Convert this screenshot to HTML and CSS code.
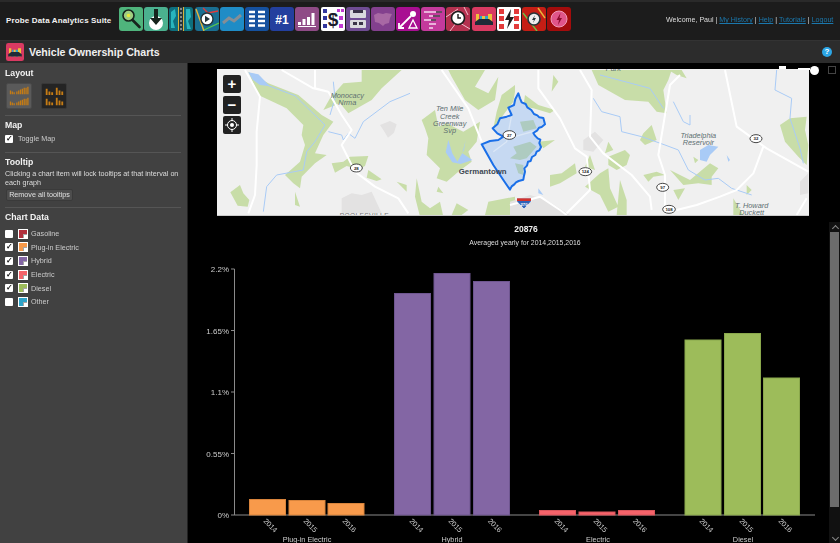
FILE: index.html
```html
<!DOCTYPE html>
<html lang="en">
<head>
  <meta charset="UTF-8">
  <meta name="viewport" content="width=device-width, initial-scale=1.0">
  <title>Vehicle Ownership Charts</title>
  <link rel="stylesheet" href="styles.css">
</head>
<body>
  <header class="top-bar">
    <div class="suite-name">Probe Data Analytics Suite</div>
    <nav class="suite-icons">
      <svg class="suite-icon" viewBox="0 0 24 24"><rect width="24" height="24" rx="3" fill="#4fb47c"/><circle cx="9.5" cy="8.5" r="5.5" fill="#9fce82" stroke="#17231c" stroke-width="1.6"/><circle cx="9.5" cy="8.5" r="1.8" fill="#e6e83a"/><path d="M13.5 13l7 7" stroke="#17231c" stroke-width="2.6" stroke-linecap="round"/></svg>
      <svg class="suite-icon" viewBox="0 0 24 24"><rect width="24" height="24" rx="3" fill="#4bb18f"/><circle cx="12" cy="16" r="7" fill="#fff"/><path d="M10 2h4v9h4l-6 7-6-7h4z" fill="#17231c"/></svg>
      <svg class="suite-icon" viewBox="0 0 24 24"><rect width="24" height="24" rx="3" fill="#0d6f7e"/><path d="M2 5l4-3 1 7-3 5 2 7H2zM17 2h4l1 8-3 4 3 8h-4l-1-9z" fill="#27b5bd"/><rect x="9" width="6" height="24" fill="#26343a"/><path d="M9.5 0v24" stroke="#d9b23a"/><path d="M14.5 0v24" stroke="#d9b23a"/><path d="M12 1v22" stroke="#ddd" stroke-dasharray="2 2"/></svg>
      <svg class="suite-icon" viewBox="0 0 24 24"><rect width="24" height="24" rx="3" fill="#1a6f92"/><path d="M1 2l8 22" stroke="#e8b53a" stroke-width="1.4"/><path d="M8 1l5 5 10-2" stroke="#e23b3b" stroke-width="1.4" fill="none"/><path d="M9 23l15-7" stroke="#58c84e" stroke-width="1.2"/><circle cx="12" cy="12" r="6" fill="#fff" stroke="#26343a" stroke-width="1.4"/><path d="M10 8.8l5 3.2-5 3.2z" fill="#26343a"/></svg>
      <svg class="suite-icon" viewBox="0 0 24 24"><rect width="24" height="24" rx="3" fill="#1f8cc6"/><path d="M3 16l6-5 5 3 7-6" stroke="#858e96" stroke-width="3" fill="none"/></svg>
      <svg class="suite-icon" viewBox="0 0 24 24"><rect width="24" height="24" rx="3" fill="#15519f"/><path d="M4 5h6M13 5h7M4 9.500h6M13 9.500h7M4 14h6M13 14h7M4 18.500h6M13 18.500h7" stroke="#fff" stroke-width="2.400"/></svg>
      <svg class="suite-icon" viewBox="0 0 24 24"><rect width="24" height="24" rx="3" fill="#233f9e"/><text x="12" y="17" class="icon-text">#1</text></svg>
      <svg class="suite-icon" viewBox="0 0 24 24"><rect width="24" height="24" rx="3" fill="#8f4b86"/><path d="M3 18v-3h3v3zM7.500 18v-6h3v6zM12 18v-8h3v8zM16.500 18V6h3v12z" fill="#fff"/><path d="M3 19.500h18" stroke="#fff"/></svg>
      <svg class="suite-icon" viewBox="0 0 24 24"><rect width="24" height="24" rx="2" fill="#fff"/><path d="M16 2h3v3h-3zM20 2h3v3h-3zM18 9h4v4h-4zM18 17h4v4h-4z" fill="#c23ad2"/><path d="M2 2h4v4H2zM2 9h4v4H2zM2 17h4v4H2z" fill="#34379c"/><text x="12" y="19" class="icon-dollar">$</text></svg>
      <svg class="suite-icon" viewBox="0 0 24 24"><rect width="24" height="24" rx="3" fill="#6f4c93"/><rect x="4" y="3" width="16" height="8" rx="1" fill="#d9d9de"/><rect x="7" y="3" width="10" height="3" fill="#3a3448"/><rect x="4" y="13" width="16" height="8" rx="1" fill="#d9d9de"/><rect x="7" y="15" width="4" height="3" fill="#3a3448"/><rect x="13" y="15" width="4" height="3" fill="#3a3448"/></svg>
      <svg class="suite-icon" viewBox="0 0 24 24"><rect width="24" height="24" rx="3" fill="#83408e"/><path d="M3 8l4-2 5 1 3-1 6 1-2 4-1 5-4 1-2 2-4-3-4-1z" fill="#a868a4"/></svg>
      <svg class="suite-icon" viewBox="0 0 24 24"><rect width="24" height="24" rx="3" fill="#a90e92"/><circle cx="17" cy="7" r="3" fill="#fff"/><path d="M15 9L4 20" stroke="#fff" stroke-width="1.800"/><path d="M3 16v5h5" stroke="#fff" stroke-width="1.800" fill="none"/><path d="M17 13l4 8h-8z" fill="none" stroke="#fff" stroke-width="1.300"/></svg>
      <svg class="suite-icon" viewBox="0 0 24 24"><rect width="24" height="24" rx="3" fill="#c43a9c"/><path d="M3 5h18M8 9h11M3 13h12M8 17h7M8 21h4" stroke="#f5d8ee" stroke-width="1.600"/><path d="M15 5h6M12 9h7M10 13h5" stroke="#3a2a3a" stroke-width="1.600"/></svg>
      <svg class="suite-icon" viewBox="0 0 24 24"><rect width="24" height="24" rx="3" fill="#b4314f"/><path d="M0 10L12 2M14 16l10 6M4 24l6-8M18 0l4 8" stroke="#f0c0cc"/><circle cx="12" cy="11" r="6.500" fill="#fff" stroke="#1c1c1c" stroke-width="1.600"/><path d="M12 7v4h3" stroke="#1c1c1c" stroke-width="1.400" fill="none"/></svg>
      <svg class="suite-icon" viewBox="0 0 24 24"><rect width="24" height="24" rx="3" fill="#d93a62"/><path d="M4 18V7h3v11zM10 18V9h3v9zM16 18V7h4v11z" fill="#efc23a"/><path d="M8 9h2v9H8zM13 9h3v9h-3z" fill="#2aa6cf"/><path d="M3 15l4-3h10l4 3v3H3z" fill="#1f2b38"/></svg>
      <svg class="suite-icon" viewBox="0 0 24 24"><rect width="24" height="24" rx="2" fill="#fff"/><path d="M2 2h5v5H2zM17 2h5v5h-5zM2 9h5v5H2zM17 9h5v5h-5zM2 17h5v5H2zM17 17h5v5h-5z" fill="#e23a3a"/><path d="M14 2l-6 11h4l-2 9 7-12h-4z" fill="#1c1c1c"/></svg>
      <svg class="suite-icon" viewBox="0 0 24 24"><rect width="24" height="24" rx="3" fill="#c51e15"/><path d="M1 6l14 18" stroke="#6cc04a" stroke-width="1.400"/><path d="M16 1l7 10" stroke="#e8b53a" stroke-width="1.400"/><circle cx="12" cy="12" r="6" fill="#eee" stroke="#26343a" stroke-width="1.600"/><path d="M13 8l-3 5h2l-1 3 3-5h-2z" fill="#26343a"/></svg>
      <svg class="suite-icon" viewBox="0 0 24 24"><rect width="24" height="24" rx="3" fill="#a30c0c"/><circle cx="12" cy="12" r="8" fill="#e0558a" stroke="#f09ab8"/><path d="M13.500 6l-4 7h2.500l-1 5 4-7h-2.500z" fill="#8c0b2e"/></svg>
    </nav>
    <div class="user-links">Welcome, Paul | <a href="#">My History</a> | <a href="#">Help</a> | <a href="#">Tutorials</a> | <a href="#">Logout</a></div>
  </header>

  <div class="title-bar">
    <svg class="title-icon" viewBox="0 0 24 24"><rect width="24" height="24" rx="3" fill="#d93a62"/><path d="M4 18V7h3v11zM10 18V9h3v9zM16 18V7h4v11z" fill="#efc23a"/><path d="M8 9h2v9H8zM13 9h3v9h-3z" fill="#2aa6cf"/><path d="M3 15l4-3h10l4 3v3H3z" fill="#1f2b38"/></svg>
    <h1>Vehicle Ownership Charts</h1>
    <span class="help-badge">?</span>
  </div>

  <div class="content">
    <aside class="sidebar">
      <section class="panel">
        <h2>Layout</h2>
        <div class="layout-options">
          <button class="layout-btn active">
            <svg viewBox="0 0 24 24"><path d="M2 10V6h1.400v4zM4 10V7h1.400v3zM6 10V8h1.400v2zM9 10V7h1.400v3zM11 10V6h1.400v4zM13 10V5h1.400v5zM15 10V4h1.400v6zM17 10V3h1.400v7zM19 10V3h1.400v7zM21 10V2h1.400v8zM2 22v-4h1.400v4zM4 22v-3h1.400v3zM6 22v-2h1.400v2zM9 22v-3h1.400v3zM11 22v-4h1.400v4zM13 22v-5h1.400v5zM15 22v-6h1.400v6zM17 22v-7h1.400v7zM19 22v-7h1.400v7zM21 22v-8h1.400v8z" fill="#c67c14"/></svg>
          </button>
          <button class="layout-btn">
            <svg viewBox="0 0 24 24"><path d="M3 11V4h2v7zM6 11V7h2v4zM9 11V8h2v3zM14 11V3h2v8zM17 11V6h2v5zM20 11V7h2v4zM3 22v-7h2v7zM6 22v-4h2v4zM9 22v-3h2v3zM14 22v-8h2v8zM17 22v-5h2v5zM20 22v-4h2v4z" fill="#c67c14"/></svg>
          </button>
        </div>
      </section>
      <section class="panel">
        <h2>Map</h2>
        <label class="check-row"><input type="checkbox" checked> Toggle Map</label>
      </section>
      <section class="panel">
        <h2>Tooltip</h2>
        <p>Clicking a chart item will lock tooltips at that interval on each graph</p>
        <button class="plain-btn">Remove all tooltips</button>
      </section>
      <section class="panel last">
        <h2>Chart Data</h2>
        <label class="check-row series"><input type="checkbox"><span class="swatch gasoline"></span>Gasoline</label>
        <label class="check-row series"><input type="checkbox" checked><span class="swatch plugin"></span>Plug-in Electric</label>
        <label class="check-row series"><input type="checkbox" checked><span class="swatch hybrid"></span>Hybrid</label>
        <label class="check-row series"><input type="checkbox" checked><span class="swatch electric"></span>Electric</label>
        <label class="check-row series"><input type="checkbox" checked><span class="swatch diesel"></span>Diesel</label>
        <label class="check-row series"><input type="checkbox"><span class="swatch other"></span>Other</label>
      </section>
    </aside>

    <main class="main">
      <div class="map">
        <svg class="map-art" viewBox="217 69 592 146">
          <rect x="217" y="69" width="592" height="146" fill="#f0f0f0"/>

          <g transform="translate(215 65) scale(.33333)">
            <path class="gray" d="M495 180l30-12 20 10-8 25-18 15-12-20zM380 400l30-15 30 5 30-10 30 65H380z"/>
            <path class="green" d="M100 20l60 35 90 35 70 60 35 20-30 40-25 55 35 5-35 25-40 40-5 35-20-15-25-25 45-40 15-50-10-30 5-30-50-50-85-40zM440 15h120l-60 55-30 35-70 40-25-30-50 20 20-35 40-45 55-5zM700 15h110l-30 50 40 20 30-50-10 70-50 30-40-30-40-70zM620 165l40-30 10 50 25-10 50 25 50-30-10 60-25 30 10 30-40 30-35 30-30-10 10-30-40-40 5-50-10-30zM350 295l35-5 20-15 55-2-10 30-20 10-35-10-35 20zM460 315l40 28-15 5-30-10zM75 360l10 25 18 20-5 20-30-3-22-40zM545 350l30 10 0 20zM605 340l15 70 25 20 30-20 10 45h-70l-15-60zM670 365l15 20-20-5zM725 415l35 20-20 15h-30zM820 410l80-15v55h-90zM835 190l60-80 5-30v-20l-40 30-15 50zM240 380l15 45-15-5z"/>
            <path class="water" d="M100 22l30 6 35 36-30-4-22-16zM700 225l12 40 15 25 20-35 5-30-10 40 30 20-35 12-25-5-20-30z"/>
            <path class="river" d="M160 62l80 30 90 88-30 50-25 30-10 55-80 15-30 35-10 75M340 200l40 10 5 15 15-20 20 15 25-50 80-60 60-25M345 150l15-50-5-50"/>
            <path class="road" d="M90 15l45 80-10 105 0 100-5 90-20 55M200 15l95 55 45 10 40 70 30 45-30 45 40 80 60 45 70 35 30 45M300 15v55M680 15l80 115 40 100M300 70l40 10"/>
            <text class="place" x="397" y="98">Monocacy</text>
            <text class="place" x="397" y="120">Nrma</text>
            <text class="place" x="704" y="139">Ten Mile</text>
            <text class="place" x="704" y="161">Creek</text>
            <text class="place" x="704" y="183">Greenway</text>
            <text class="place" x="704" y="204">Svp</text>
            <text class="ghost" x="448" y="458">POOLESVILLE</text>
            <ellipse class="shield" cx="424" cy="309" rx="18" ry="12"/>
            <text class="shield-no" x="424" y="314">28</text>
          </g>

          <g transform="translate(510 65) scale(.33333)">
            <path class="gray" d="M220 225l35-25 25 25-30 35-30-5zM0 410l60-20 50 15 70 45H0zM870 350l25-25v60l-25 5z"/>
            <path class="green" d="M245 15h240l-10 30-15 30 10 70-30-5-25-30-70-5-80-45zM475 15h40l15 25-30-10zM400 205l25-25 15 45-35 15-15-15zM295 275l50-20 15 15-10 30-30 15-25-15zM295 230l15 25-25 10zM240 270l15 45-30-10zM225 365l45-40 25-15 5 60 25 55-30 15-25-50zM330 345l20 60 0 45h-30zM120 330l35-5 40-30 5 30-50 30-30 10zM400 330l40-10 25 10-35 5-15 15zM490 375l35-5-20 35zM480 315l60 30 60-50 25 15-20 25 0 25-40-5-45 5zM710 360l15 15-15 15zM670 400l30 50h-30zM810 180l30-20 50-5-5 40 10 45-5 60-25-25-40-45zM45 90l40 30 50 15-15 10-50-15-30-5zM85 230l50-5-35 25zM130 30l15 20-20 30zM195 25l15 30zM550 275l15 10-10 10z"/>
            <path class="water" d="M570 255l25-15 30 5-25 25-10 20-20-5zM650 270l10 15-5 5zM85 370l15 20-15-5z"/>
            <path class="river" d="M250 100l25 40 55 15 5 45 60 15 70 25 40 15 30 60 50 30 40-5 40 30 60 20M490 110l30 60 20 10 0-30M800 15l-5 60 50 25-5 60 30 90 10 45M270 30l150 40 40 60"/>
            <path class="road" d="M85 15v55l65 90 45 90 35 25 10 100-70 70M210 15l35 60-5 140 40 50 85 65 55 65 5 40M510 30l-30 30-15 90-20 120 20 60 0 100M645 15l35 170 90 65 125 70M760 245l-30 80-50 50-50 20-70 25-60 15M890 400l-30 50M0 420l90-25 60 40 20 15"/>
            <text class="place" x="565" y="218">Triadelphia</text>
            <text class="place" x="565" y="240">Reservoir</text>
            <text class="place" x="725" y="428">T. Howard</text>
            <text class="place" x="725" y="450">Duckett</text>
            <text class="place" x="310" y="18">Park</text>
            <ellipse class="shield" cx="738" cy="221" rx="18" ry="12"/>
            <text class="shield-no" x="738" y="226">32</text>
            <ellipse class="shield" cx="226" cy="320" rx="19" ry="12"/>
            <text class="shield-no" x="226" y="325">124</text>
            <ellipse class="shield" cx="458" cy="367" rx="18" ry="12"/>
            <text class="shield-no" x="458" y="372">97</text>
            <ellipse class="shield" cx="477" cy="433" rx="19" ry="12"/>
            <text class="shield-no" x="477" y="438">108</text>
          </g>

          <g transform="translate(440 85) scale(.33333)">
            <path class="zone-fill" d="M235 25L240 40 245 52 257 57 262 67 274 75 282 87 292 91 298 97 310 99 315 118 305 126 297 128 292 136 280 144 285 152 293 160 301 164 298 174 303 186 298 196 290 200 286 210 276 216 272 228 264 230 261 242 253 250 255 260 252 272 250 284 236 288 228 292 223 298 215 304 210 314 190 285 160 240 125 178 150 168 175 165 190 155 172 145 158 130 172 118 180 100 200 95 215 90 205 68 222 60 226 42z"/>
            <path class="zone-green" d="M240 110l40-5 10 25-40 10zM220 185l50-15 20 15-30 35-20 5-30-5 20-15zM225 235l25 5 0 30-15-5z"/>
            <path class="zone-road" d="M215 90l-15 80-40 30M205 160l90-25"/>
            <path class="zone-line" d="M235 25L240 40 245 52 257 57 262 67 274 75 282 87 292 91 298 97 310 99 315 118 305 126 297 128 292 136 280 144 285 152 293 160 301 164 298 174 303 186 298 196 290 200 286 210 276 216 272 228 264 230 261 242 253 250 255 260 252 272 250 284 236 288 228 292 223 298 215 304 210 314 190 285 160 240 125 178 150 168 175 165 190 155 172 145 158 130 172 118 180 100 200 95 215 90 205 68 222 60 226 42z"/>
            <ellipse class="shield" cx="208" cy="150" rx="19" ry="13"/>
            <text class="shield-no" x="208" y="155">27</text>
            <path d="M231 340h42v10l-21 22-21-22z" fill="#2e62b8" stroke="#fff" stroke-width="2"/>
            <path d="M231 340h42v8h-42z" fill="#d2322c"/>
            <text class="interstate" x="252" y="362">270</text>
            <text class="town" x="128" y="268">Germantown</text>
          </g>
        </svg>
        <div class="map-controls">
          <button class="map-btn">+</button>
          <button class="map-btn">&minus;</button>
          <button class="map-btn">
            <svg viewBox="0 0 16 16"><circle cx="8" cy="8" r="4.500" fill="none" stroke="#fff"/><circle cx="8" cy="8" r="2" fill="#fff"/><path d="M8 1v3M8 12v3M1 8h3M12 8h3" stroke="#fff"/></svg>
          </button>
        </div>
      </div>
      <div class="map-slider">
        <span class="slider-stop"></span>
        <span class="slider-fill"></span>
        <span class="slider-knob"></span>
        <span class="slider-box"></span>
      </div>

      <div class="chart-row">
        <svg class="chart" viewBox="188 222 641 321">
          <text class="chart-title" x="526" y="232">20876</text>
          <text class="chart-sub" x="525" y="245">Averaged yearly for 2014,2015,2016</text>

          <path class="axis" d="M231 269h3.500v246M231 330.500h3.500M231 392h3.500M231 453.500h3.500M231 515h584"/>
          <text class="tick" x="229" y="272">2.2%</text>
          <text class="tick" x="229" y="334">1.65%</text>
          <text class="tick" x="229" y="395">1.1%</text>
          <text class="tick" x="229" y="457">0.55%</text>
          <text class="tick" x="229" y="518">0%</text>

          <g class="bars plugin">
            <rect x="249.500" y="499.500" width="36" height="15.500"/>
            <rect x="289" y="500.500" width="36" height="14.500"/>
            <rect x="328" y="503.500" width="36" height="11.500"/>
          </g>
          <g class="bars hybrid">
            <rect x="394.500" y="293.500" width="36" height="221.500"/>
            <rect x="434" y="273.500" width="36" height="241.500"/>
            <rect x="473.500" y="281.500" width="36" height="233.500"/>
          </g>
          <g class="bars electric">
            <rect x="539.500" y="510.500" width="36" height="4.500"/>
            <rect x="579" y="512" width="36" height="3"/>
            <rect x="618.500" y="510.500" width="36" height="4.500"/>
          </g>
          <g class="bars diesel">
            <rect x="685" y="340" width="36" height="175"/>
            <rect x="724.500" y="333.500" width="36" height="181.500"/>
            <rect x="763.500" y="378" width="36" height="137"/>
          </g>

          <g class="years">
            <text transform="translate(263 521.500) rotate(45)">2014</text>
            <text transform="translate(303 521.500) rotate(45)">2015</text>
            <text transform="translate(342 521.500) rotate(45)">2016</text>
            <text transform="translate(409 521.500) rotate(45)">2014</text>
            <text transform="translate(448 521.500) rotate(45)">2015</text>
            <text transform="translate(487.500 521.500) rotate(45)">2016</text>
            <text transform="translate(554 521.500) rotate(45)">2014</text>
            <text transform="translate(593 521.500) rotate(45)">2015</text>
            <text transform="translate(632.500 521.500) rotate(45)">2016</text>
            <text transform="translate(699 521.500) rotate(45)">2014</text>
            <text transform="translate(739 521.500) rotate(45)">2015</text>
            <text transform="translate(778 521.500) rotate(45)">2016</text>
          </g>
          <text class="group" x="307" y="542">Plug-in Electric</text>
          <text class="group" x="452" y="542">Hybrid</text>
          <text class="group" x="598" y="542">Electric</text>
          <text class="group" x="743" y="542">Diesel</text>
        </svg>
        <div class="scrollbar">
          <span class="scroll-arrow up"></span>
          <span class="scroll-thumb"></span>
          <span class="scroll-arrow down"></span>
        </div>
      </div>
    </main>
  </div>
</body>
</html>
```

FILE: styles.css
```css
* {
  box-sizing: border-box;
}

html, body {
  height: 100%;
}

body {
  margin: 0;
  display: flex;
  flex-direction: column;
  overflow: hidden;
  background: #000;
  color: #e0e0e0;
  font-family: "Liberation Sans", Arial, sans-serif;
  font-size: 7.200px;
}

/* top bar */
.top-bar {
  height: 41px;
  flex: none;
  display: flex;
  align-items: center;
  padding: 0 7px 4px 6px;
  background: #1c1c1c;
  border-top: 2px solid #2a2a2a;
  border-bottom: 1px solid #333;
}

.suite-name {
  width: 113px;
  flex: none;
  padding-top: 2px;
  font-size: 8px;
  font-weight: bold;
  letter-spacing: 0.15px;
  color: #f2f2f2;
  white-space: nowrap;
}

.suite-icons {
  display: flex;
  gap: 1.2px;
}

.suite-icon {
  width: 24px;
  height: 24px;
  flex: none;
}

.icon-text {
  font-size: 12px;
  font-weight: bold;
  fill: #fff;
  text-anchor: middle;
}

.icon-dollar {
  font-size: 19px;
  font-weight: bold;
  fill: #1c1c2c;
  text-anchor: middle;
}

.user-links {
  margin-left: auto;
  padding-top: 2px;
  white-space: nowrap;
  color: #ddd;
  font-size: 7.100px;
  will-change: transform;
}

.user-links a {
  color: #1b78ad;
}

/* title bar */
.title-bar {
  height: 22px;
  flex: none;
  display: flex;
  align-items: center;
  gap: 5px;
  padding: 0 8px 0 6px;
  background: #2c2c2c;
}

.title-icon {
  width: 18px;
  height: 18px;
}

.title-bar h1 {
  margin: 0;
  font-size: 10.600px;
  color: #f0f0f0;
}

.help-badge {
  margin-left: auto;
  width: 10px;
  height: 10px;
  border-radius: 50%;
  background: #2ca6e6;
  color: #fff;
  font-size: 8px;
  font-weight: bold;
  line-height: 10px;
  text-align: center;
}

/* sidebar */
.content {
  flex: 1;
  min-height: 0;
  display: flex;
}

.sidebar {
  width: 188px;
  flex: none;
  padding: 5px 6px 0 5px;
  background: #414141;
  border-right: 1px solid #222;
}

.panel {
  padding-bottom: 6px;
  margin-bottom: 4px;
  border-bottom: 1px solid #555;
  will-change: transform;
}

.panel.last {
  border-bottom: none;
}

.panel h2 {
  margin: 0 0 2px;
  font-size: 8.700px;
  line-height: 10px;
  color: #f2f2f2;
}

.panel.last h2 {
  margin-bottom: 5px;
}

.panel p {
  margin: 0 0 2px 0;
  padding-top: 1px;
  line-height: 8.500px;
  font-size: 7.200px;
  color: #ddd;
}

.layout-options {
  display: flex;
  gap: 9px;
  padding: 3px 0 0 1px;
}

.layout-btn {
  width: 26px;
  height: 26px;
  padding: 1px;
  background: #242424;
  border: 1px solid #383838;
  border-radius: 2px;
}

.layout-btn.active {
  background: #5a5a5a;
  border-color: #4a4a4a;
}

.layout-btn svg {
  display: block;
  width: 100%;
  height: 100%;
}

.check-row {
  display: flex;
  align-items: center;
  height: 13.600px;
  font-size: 7.200px;
  color: #ccc;
}

.check-row input {
  appearance: none;
  -webkit-appearance: none;
  width: 8px;
  height: 8px;
  margin: 0 5px 0 0;
  position: relative;
  background: #fff;
  border-radius: 1px;
}

.check-row input:checked::after {
  content: "\2713";
  position: absolute;
  left: 1px;
  top: -1px;
  color: #111;
  font-size: 8px;
  font-weight: bold;
  line-height: 10px;
}

.swatch {
  position: relative;
  width: 10px;
  height: 10px;
  margin-right: 3px;
  border: 1px solid #fff;
}

.swatch::after {
  content: "";
  position: absolute;
  right: 0;
  bottom: 0;
  width: 4px;
  height: 4px;
  background: #fff;
  box-shadow: inset 1px 1px 0 rgba(0, 0, 0, 0.35);
}

.swatch.gasoline { background: #b0303c; }
.swatch.plugin { background: #f7994a; }
.swatch.hybrid { background: #8366a4; }
.swatch.electric { background: #f5636a; }
.swatch.diesel { background: #9dbc5a; }
.swatch.other { background: #2fa3c8; }

.plain-btn {
  display: block;
  width: 67px;
  height: 12px;
  margin-left: 1px;
  padding: 0;
  background: #4d4d4d;
  border: 1px solid #3a3a3a;
  border-radius: 2px;
  color: #e0e0e0;
  font: 7.200px "Liberation Sans", Arial, sans-serif;
  line-height: 10px;
  white-space: nowrap;
}

/* main area */
.main {
  flex: 1;
  min-width: 0;
  position: relative;
  display: flex;
  flex-direction: column;
  padding-top: 6px;
  background: #000;
}

.map {
  position: relative;
  width: 592px;
  height: 147px;
  flex: none;
  margin-left: 29px;
  border-bottom: 1px solid #ccc;
}

.map-art {
  display: block;
  width: 100%;
  height: 100%;
}

.map-controls {
  position: absolute;
  left: 6px;
  top: 6px;
  display: flex;
  flex-direction: column;
  gap: 2.500px;
}

.map-btn {
  width: 18px;
  height: 18px;
  padding: 1px;
  background: #222;
  border: none;
  border-radius: 2px;
  color: #fff;
  font: bold 15px/16px "Liberation Sans", Arial, sans-serif;
}

.map-btn svg {
  display: block;
  width: 100%;
  height: 100%;
}

.map-slider {
  position: absolute;
  top: 0;
  left: 0;
  right: 0;
  height: 12px;
}

.slider-stop {
  position: absolute;
  left: 591px;
  top: 3px;
  width: 7px;
  height: 3px;
  background: #fff;
}

.slider-fill {
  position: absolute;
  left: 610px;
  top: 5px;
  width: 12px;
  height: 2px;
  background: #fff;
}

.slider-knob {
  position: absolute;
  left: 622px;
  top: 3px;
  width: 9px;
  height: 9px;
  border-radius: 50%;
  background: #fff;
}

.slider-box {
  position: absolute;
  left: 640px;
  top: 3px;
  width: 8px;
  height: 8px;
  border: 1px solid #444;
}

/* map drawing */
.map-art .green { fill: #c8dda8; }
.map-art .gray { fill: #e3e2e2; }
.map-art .water { fill: #a9cbf6; }
.map-art .river { fill: none; stroke: #a9cbf6; stroke-width: 3; }
.map-art .road { fill: none; stroke: #fff; stroke-width: 6; stroke-linejoin: round; }
.map-art .zone-fill { fill: #c6d9f2; }
.map-art .zone-line { fill: none; stroke: #1a6fe8; stroke-width: 6; stroke-linejoin: round; }
.map-art .zone-green { fill: #aecbc0; }
.map-art .zone-road { fill: none; stroke: #dbe7f6; stroke-width: 4; }
.map-art .shield { fill: #fff; stroke: #222; stroke-width: 2.500; }
.map-art .shield-no { font-size: 13px; font-weight: bold; fill: #222; text-anchor: middle; }
.map-art .place { font-size: 22px; font-style: italic; fill: #5d6f70; text-anchor: middle; }
.map-art .town { font-size: 23.500px; font-weight: bold; fill: #3c4650; text-anchor: middle; }
.map-art .ghost { font-size: 20px; fill: #777; text-anchor: middle; letter-spacing: 1px; }
.map-art .interstate { font-size: 13px; font-weight: bold; fill: #fff; text-anchor: middle; }

/* chart */
.chart-row {
  flex: 1;
  min-height: 0;
  display: flex;
  margin-top: 6px;
}

.chart {
  display: block;
  width: 641px;
  height: 321px;
  flex: none;
  will-change: transform;
}

.chart text {
  font-family: "Liberation Sans", Arial, sans-serif;
}

.chart-title {
  font-size: 8.500px;
  font-weight: bold;
  fill: #eee;
  text-anchor: middle;
}

.chart-sub {
  font-size: 6.900px;
  fill: #ddd;
  text-anchor: middle;
}

.axis {
  fill: none;
  stroke: #8a8a8a;
  stroke-width: 1;
}

.tick {
  font-size: 8px;
  fill: #ccc;
  text-anchor: end;
}

.bars.plugin rect { fill: #f89a4b; stroke: #d8843c; }
.bars.hybrid rect { fill: #8366a4; stroke: #6f5690; }
.bars.electric rect { fill: #f5636a; stroke: #d8555b; }
.bars.diesel rect { fill: #9dbc5a; stroke: #8aa84c; }

.years text {
  font-size: 7.300px;
  fill: #ccc;
}

.group {
  font-size: 7.300px;
  fill: #ccc;
  text-anchor: middle;
}

.scrollbar {
  flex: 1;
  display: flex;
  flex-direction: column;
  align-items: center;
  background: #111;
}

.scroll-arrow {
  width: 10px;
  height: 10px;
  flex: none;
  position: relative;
}

.scroll-arrow::after {
  content: "";
  position: absolute;
  left: 3px;
  width: 4px;
  height: 4px;
  border-left: 1px solid #888;
  border-top: 1px solid #888;
}

.scroll-arrow.up::after {
  top: 4px;
  transform: rotate(45deg);
}

.scroll-arrow.down::after {
  top: 2px;
  transform: rotate(225deg);
}

.scroll-thumb {
  width: 9px;
  flex: 1;
  margin-bottom: 26px;
  background: #6c6c6c;
}
```
